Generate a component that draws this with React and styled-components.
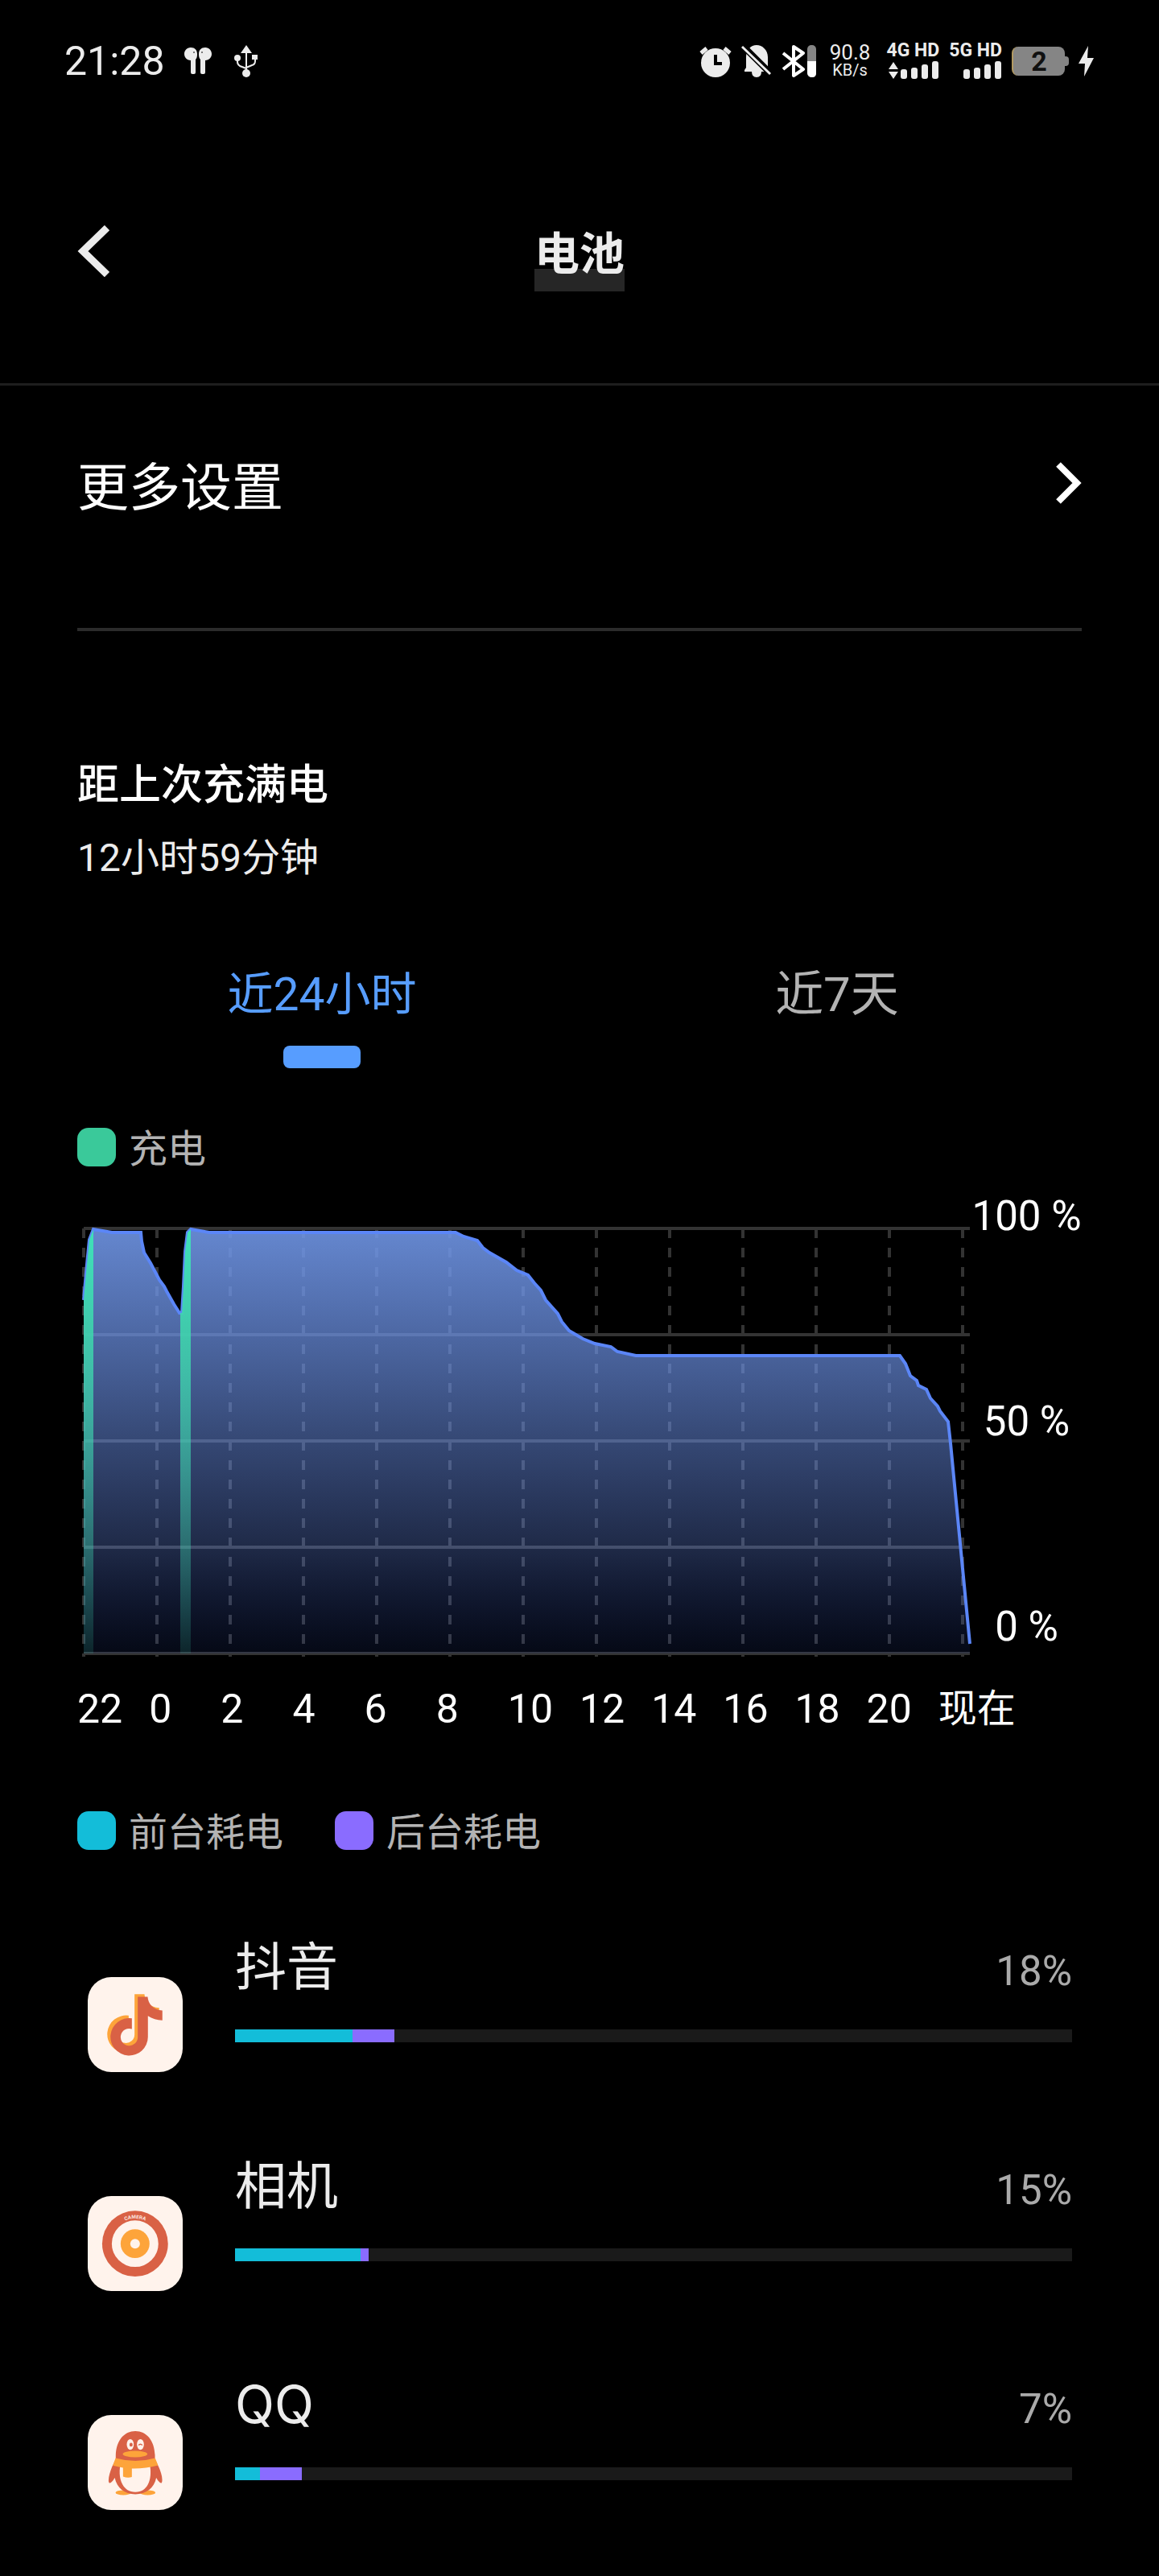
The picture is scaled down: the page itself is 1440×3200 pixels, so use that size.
import React, { useState } from 'react'
import styled, { createGlobalStyle } from 'styled-components'

const curve = [
    [104, 1615], [107, 1581], [111, 1540], [116, 1527], [139, 1531], [175, 1531], [176, 1542], [179, 1556],
    [187, 1569], [198, 1590], [204, 1598], [207, 1604], [216, 1620], [223, 1631], [226, 1631], [228, 1598],
    [230, 1555], [233, 1531], [237, 1527], [260, 1531], [566, 1531], [576, 1536], [593, 1541], [600, 1550],
    [608, 1556], [629, 1568], [642, 1578], [656, 1584], [664, 1594], [672, 1603], [678, 1615], [693, 1632],
    [698, 1642], [707, 1653], [724, 1663], [739, 1669], [759, 1673], [767, 1679], [790, 1684], [1118, 1684],
    [1125, 1694], [1131, 1709], [1139, 1715], [1141, 1721], [1151, 1726], [1156, 1737], [1165, 1747],
    [1168, 1753], [1178, 1766], [1181, 1793], [1205, 2042],
]
const points = curve.map((p) => p.join(',')).join(' ')
const area = `104,2054 ${points} 1205,2054`

const hours = ['22', '0', '2', '4', '6', '8', '10', '12', '14', '16', '18', '20', '现在']

const BatteryChart = () => (
    <Plot viewBox='96 1520 1111 540' role='img' aria-label='电量'>
        <defs>
            <linearGradient id='level' gradientUnits='userSpaceOnUse' x1='0' y1='1526' x2='0' y2='2054'>
                <stop offset='0' stopColor='#7096e6' stopOpacity='0.9' />
                <stop offset='0.5' stopColor='#7199f7' stopOpacity='0.47' />
                <stop offset='0.75' stopColor='#6f96ff' stopOpacity='0.28' />
                <stop offset='1' stopColor='#3c64f0' stopOpacity='0.09' />
            </linearGradient>
            <linearGradient id='charge' gradientUnits='userSpaceOnUse' x1='0' y1='1526' x2='0' y2='2054'>
                <stop offset='0' stopColor='#3fe0b8' />
                <stop offset='0.25' stopColor='#3ed6ac' stopOpacity='0.88' />
                <stop offset='1' stopColor='#3edcb4' stopOpacity='0.13' />
            </linearGradient>
            <clipPath id='under'>
                <polygon points={area} />
            </clipPath>
        </defs>
        <g stroke='#333' strokeWidth='4'>
            {[1526, 1658, 1790, 1922, 2054].map((y) => (
                <line key={y} x1='104' x2='1205' y1={y} y2={y} />
            ))}
            {hours.map((hour, i) => (
                <line key={hour} x1={104 + i * 91} x2={104 + i * 91} y1='1526' y2='2058' strokeDasharray='12 12' />
            ))}
        </g>
        <polygon points={area} fill='url(#level)' />
        <polyline points={points} fill='none' stroke='#5b86f7' strokeWidth='4' />
        <g clipPath='url(#under)' fill='url(#charge)'>
            <rect x='104' y='1526' width='12' height='528' />
            <rect x='224' y='1526' width='13' height='528' />
        </g>
    </Plot>
)

const Douyin = () => (
    <AppIcon viewBox='57 76 355 355'>
        <rect x='57' y='76' width='355' height='355' rx='88' fill='#fff3ec' />
        <path transform='translate(-12 -10)' fill='#fda43a' d='M244 150H281C283 176 301 199 336 201V238C316 237 298 231 282 221V300A70 70 0 1 1 222 230V270A32 32 0 1 0 244 301Z' />
        <path fill='#d96145' d='M244 150H281C283 176 301 199 336 201V238C316 237 298 231 282 221V300A70 70 0 1 1 222 230V270A32 32 0 1 0 244 301Z' />
    </AppIcon>
)

const Camera = () => (
    <AppIcon viewBox='57 83 355 355'>
        <defs>
            <path id='rim' d='M140 261A94 94 0 0 1 328 261' />
        </defs>
        <rect x='57' y='83' width='355' height='355' rx='88' fill='#fff3ec' />
        <circle cx='234' cy='261' r='123' fill='#d96145' />
        <circle cx='234' cy='261' r='87' fill='#fff3ec' />
        <circle cx='234' cy='261' r='54' fill='#fda43a' />
        <circle cx='234' cy='261' r='18' fill='#fff3ec' />
        <text fontFamily='Inter, sans-serif' fontSize='18' fontWeight='600' fill='#fff3ec' textAnchor='middle'>
            <textPath href='#rim' startOffset='50%'>CAMERA</textPath>
        </text>
    </AppIcon>
)

const Penguin = () => (
    <AppIcon viewBox='57 57 355 355'>
        <rect x='57' y='57' width='355' height='355' rx='88' fill='#fff3ec' />
        <ellipse cx='190' cy='347' rx='29' ry='9' fill='#fda43a' />
        <ellipse cx='281' cy='347' rx='29' ry='9' fill='#fda43a' />
        <path fill='#d96145' d='M162 222C158 158 190 117 235 117S312 158 308 222L322 250C330 268 337 288 335 305C334 315 326 314 313 292C306 330 275 353 235 353S166 330 158 292C145 314 137 315 135 305C134 288 141 268 148 250Z' />
        <path fill='#fff3ec' d='M178 248H290C298 300 280 345 235 345S170 300 178 248Z' />
        <path fill='#fda43a' d='M161 218Q235 239 309 218L320 245Q272 258 222 257V289Q205 293 189 287V254Q170 251 151 246Z' />
        <ellipse cx='216' cy='167' rx='13' ry='20' fill='#fff3ec' />
        <ellipse cx='254' cy='167' rx='13' ry='20' fill='#fff3ec' />
        <ellipse cx='219' cy='168' rx='6' ry='7' fill='#d96145' />
        <path d='M247 170Q254 162 261 170' fill='none' stroke='#d96145' strokeWidth='4' />
        <ellipse cx='234' cy='203' rx='46' ry='12' fill='#fda43a' />
    </AppIcon>
)

const apps = [
    { name: '抖音', percent: 18, front: 14, back: 5, icon: <Douyin /> },
    { name: '相机', percent: 15, front: 15, back: 1, icon: <Camera /> },
    { name: 'QQ', percent: 7, front: 3, back: 5, icon: <Penguin /> },
]

const Signal = () => (
    <svg width='48' height='22' viewBox='0 0 48 22' fill='#ececec'>
        <rect x='0' y='10' width='8' height='12' rx='3' />
        <rect x='13' y='8' width='8' height='14' rx='3' />
        <rect x='26' y='4' width='8' height='18' rx='3' />
        <rect x='39' y='0' width='8' height='22' rx='3' />
    </svg>
)

const StatusBar = () => (
    <Status>
        <Time>21:28</Time>
        <Earbuds width='34' height='34' viewBox='0 0 34 34' fill='#ececec'>
            <path d='M8 0C13 0 16 3 16 8V9C16 12 15 14 14 15V31Q14 33 12 33H10Q8 33 8 31V16C3 16 0 12 0 8S3 0 8 0Z' />
            <path d='M26 0C21 0 18 3 18 8V9C18 12 19 14 20 15V31Q20 33 22 33H24Q26 33 26 31V16C31 16 34 12 34 8S31 0 26 0Z' />
            <circle cx='12' cy='6' r='1' fill='#555' />
            <circle cx='22' cy='6' r='1' fill='#555' />
        </Earbuds>
        <svg width='30' height='40' viewBox='0 0 30 40'>
            <path d='M15 8V34M4 17V21Q4 24 7 26L15 29M26 15V20Q26 24 22 25L15 28' fill='none' stroke='#ececec' strokeWidth='2' />
            <path d='M15 0L22 10H8ZM22 12H29V18H22Z' fill='#ececec' />
            <circle cx='4' cy='16' r='4' fill='#ececec' />
            <circle cx='15' cy='35' r='5' fill='#ececec' />
        </svg>
        <StatusRight>
            <svg width='40' height='40' viewBox='0 0 40 40'>
                <circle cx='20' cy='22' r='18' fill='#ececec' />
                <path d='M2 10L9 4M38 10L31 4' stroke='#ececec' strokeWidth='5' />
                <path d='M20 12V23H28' stroke='#000' strokeWidth='4' fill='none' />
            </svg>
            <svg width='38' height='40' viewBox='0 0 38 40'>
                <path fill='#ececec' d='M4 33V31L6 28V15C6 6 12 0 19 0S33 6 33 15V27L36 31V33H25Q25 40 19 40T13 33Z' />
                <path d='M2 1L38 37' stroke='#000' strokeWidth='8' />
                <path d='M1 2L36 36' stroke='#ececec' strokeWidth='3' />
            </svg>
            <svg width='44' height='40' viewBox='0 0 44 40'>
                <path d='M2 10L27 30L15 38V2L27 10L2 30' fill='none' stroke='#fff' strokeWidth='4' strokeLinejoin='round' />
                <rect x='32' y='0' width='11' height='40' rx='5' fill='#858585' />
                <path d='M32 20H43V35Q43 40 38 40T32 35Z' fill='#fff' />
            </svg>
            <Speed>
                <span>90.8</span>
                <SpeedUnit>KB/s</SpeedUnit>
            </Speed>
            <Network>
                <span>4G HD</span>
                <Bars>
                    <svg width='14' height='22' viewBox='0 0 14 22' fill='#ececec'>
                        <path d='M7 1L13 10H1ZM7 22L1 13H13Z' />
                    </svg>
                    <Signal />
                </Bars>
            </Network>
            <Network>
                <span>5G HD</span>
                <Bars>
                    <Signal />
                </Bars>
            </Network>
            <Power>
                <Battery>2</Battery>
                <Nub />
            </Power>
            <svg width='20' height='38' viewBox='0 0 20 38' fill='#ececec'>
                <path d='M12 0L0 22H8L7 38L19 15H11Z' />
            </svg>
        </StatusRight>
    </Status>
)

const App = () => {
    const [tab, setTab] = useState('day')

    return (
        <Page>
            <GlobalStyle />
            <StatusBar />
            <Header>
                <BackButton aria-label='返回'>
                    <svg width='40' height='64' viewBox='0 0 40 64' fill='none' stroke='#ececec' strokeWidth='9'>
                        <path d='M37 3L7 32L37 61' />
                    </svg>
                </BackButton>
                <Title>电池</Title>
            </Header>
            <Content>
                <MoreLink href='#settings'>
                    更多设置
                    <svg width='32' height='52' viewBox='0 0 32 52' fill='none' stroke='#fff' strokeWidth='8'>
                        <path d='M3 3L26 26L3 49' />
                    </svg>
                </MoreLink>
                <Summary>
                    <SummaryTitle>距上次充满电</SummaryTitle>
                    <SummaryText>12小时59分钟</SummaryText>
                </Summary>
                <Tabs>
                    <Tab $active={tab === 'day'} onClick={() => setTab('day')}>近24小时</Tab>
                    <Tab $active={tab === 'week'} onClick={() => setTab('week')}>近7天</Tab>
                </Tabs>
                <Legend>
                    <LegendItem><Swatch $color='#3ac99a' />充电</LegendItem>
                </Legend>
                <Chart>
                    <BatteryChart />
                    <Levels>
                        <span>100 %</span>
                        <span>50 %</span>
                        <span>0 %</span>
                    </Levels>
                </Chart>
                <Hours>
                    {hours.map((hour) => <Hour key={hour}>{hour}</Hour>)}
                </Hours>
                <UsageLegend>
                    <LegendItem><Swatch $color='#13bdd9' />前台耗电</LegendItem>
                    <LegendItem><Swatch $color='#8a6cff' />后台耗电</LegendItem>
                </UsageLegend>
                <AppList>
                    {apps.map((app) => (
                        <AppRow key={app.name}>
                            {app.icon}
                            <AppBody>
                                <AppHead>
                                    <AppName>{app.name}</AppName>
                                    <AppPercent>{app.percent}%</AppPercent>
                                </AppHead>
                                <Track>
                                    <Used $color='#13bdd9' style={{ width: `${app.front}%` }} />
                                    <Used $color='#8a6cff' style={{ width: `${app.back}%` }} />
                                </Track>
                            </AppBody>
                        </AppRow>
                    ))}
                </AppList>
            </Content>
        </Page>
    )
}

const GlobalStyle = createGlobalStyle`
    * {
        box-sizing: border-box;
    }

    body {
        margin: 0;
        background-color: #000;
    }

    svg {
        display: block;
        flex-shrink: 0;
    }
`

const Page = styled.div`
    min-height: 100vh;
    background-color: #000;
    color: #fff;
    font-family: Roboto, "Noto Sans CJK SC", sans-serif;
    font-size: 48px;
`

const Status = styled.div`
    height: 152px;
    padding: 0 80px;
    display: flex;
    align-items: center;
    color: #ececec;
`

const Time = styled.span`
    font-size: 50px;
`

const Earbuds = styled.svg`
    margin: 0 28px 0 24px;
`

const StatusRight = styled.div`
    margin-left: auto;
    display: flex;
    align-items: center;
    gap: 12px;
`

const Speed = styled.div`
    display: flex;
    flex-direction: column;
    align-items: center;
    margin: 0 8px 0 4px;
    font-size: 26px;
    line-height: 22px;
`

const SpeedUnit = styled.span`
    font-size: 20px;
`

const Network = styled.div`
    display: flex;
    flex-direction: column;
    align-items: flex-end;
    gap: 4px;
    font-size: 23px;
    font-weight: 700;
    line-height: 18px;
`

const Bars = styled.div`
    display: flex;
    gap: 2px;
`

const Power = styled.div`
    display: flex;
    align-items: center;
`

const Battery = styled.div`
    width: 66px;
    height: 36px;
    border-left: 2px solid #b39a62;
    border-radius: 8px;
    background-color: #858585;
    color: #111;
    font-size: 34px;
    font-weight: 700;
    line-height: 36px;
    text-align: center;
`

const Nub = styled.div`
    width: 5px;
    height: 12px;
    border-radius: 0 4px 4px 0;
    background-color: #858585;
`

const Header = styled.header`
    height: 327px;
    padding: 0 96px;
    display: grid;
    grid-template-columns: 1fr auto 1fr;
    align-items: center;
    border-bottom: 3px solid #1e1e1e;
`

const BackButton = styled.button`
    padding: 0 0 4px;
    border: 0;
    background: none;
    justify-self: start;
    cursor: pointer;
`

const Title = styled.h1`
    margin: 0;
    padding-top: 4px;
    background: linear-gradient(#262626, #262626) bottom / 100% 28px no-repeat;
    color: #ececec;
    font-size: 56px;
    font-weight: 700;
    line-height: 92px;
`

const Content = styled.main`
    padding: 0 96px;
`

const MoreLink = styled.a`
    height: 305px;
    padding-bottom: 60px;
    display: flex;
    align-items: center;
    justify-content: space-between;
    border-bottom: 4px solid #2b2b2b;
    color: #fff;
    font-size: 64px;
    text-decoration: none;
`

const Summary = styled.section`
    padding-top: 156px;
`

const SummaryTitle = styled.h2`
    margin: 0;
    font-size: 52px;
    font-weight: 500;
    line-height: 72px;
`

const SummaryText = styled.p`
    margin: 22px 0 0;
    color: #ececec;
    line-height: 64px;
`

const Tabs = styled.div`
    margin: 98px -16px 0;
    display: grid;
    grid-template-columns: 1fr 1fr;
`

const Tab = styled.button`
    padding: 0;
    border: 0;
    background: none;
    display: flex;
    flex-direction: column;
    align-items: center;
    gap: 23px;
    color: ${({ $active }) => ($active ? '#579dff' : '#b3b3b3')};
    font-family: inherit;
    font-size: ${({ $active }) => ($active ? '57px' : '60px')};
    line-height: 80px;
    cursor: pointer;

    &::after {
        content: '';
        width: 96px;
        height: 28px;
        border-radius: 8px;
        background-color: ${({ $active }) => ($active ? '#579dff' : 'transparent')};
    }
`

const Legend = styled.div`
    margin-top: 74px;
    display: flex;
    gap: 64px;
`

const UsageLegend = styled(Legend)`
    margin-top: 97px;
`

const LegendItem = styled.div`
    display: flex;
    gap: 16px;
    color: #b3b3b3;
    line-height: 54px;
`

const Swatch = styled.span`
    width: 48px;
    height: 48px;
    border-radius: 14px;
    background-color: ${({ $color }) => $color};
`

const Chart = styled.div`
    margin-top: 29px;
    display: flex;
`

const Plot = styled.svg`
    flex: 1;
    min-width: 0;
    margin-top: 36px;
`

const Levels = styled.div`
    width: 137px;
    margin-bottom: 12px;
    display: flex;
    flex-direction: column;
    align-items: center;
    justify-content: space-between;
    font-size: 51px;
    line-height: 54px;
    white-space: nowrap;
`

const Hours = styled.div`
    margin-top: 33px;
    display: grid;
    grid-template-columns: repeat(14, minmax(0, 1fr));
    font-size: 50px;
    line-height: 60px;
`

const Hour = styled.span`
    white-space: nowrap;

    &:last-child {
        grid-column: span 2;
        font-size: 48px;
    }
`

const AppList = styled.ul`
    margin: 80px 0 0;
    padding: 0;
    list-style: none;
`

const AppRow = styled.li`
    height: 272px;
    padding: 0 12px 0 13px;
    display: flex;
    gap: 65px;
`

const AppIcon = styled.svg`
    width: 118px;
    height: 118px;
    margin-top: 72px;
`

const AppBody = styled.div`
    flex: 1;
    padding-top: 17px;
`

const AppHead = styled.div`
    display: flex;
    align-items: center;
    justify-content: space-between;
    line-height: 80px;
`

const AppName = styled.span`
    color: #ececec;
    font-family: Inter, "Noto Sans CJK SC", sans-serif;
    font-size: 64px;
`

const AppPercent = styled.span`
    padding-top: 12px;
    color: #aaa;
    font-size: 51px;
    line-height: 72px;
`

const Track = styled.div`
    height: 16px;
    margin-top: 36px;
    display: flex;
    background-color: #1a1a1a;
`

const Used = styled.div`
    background-color: ${({ $color }) => $color};
`

export default App
